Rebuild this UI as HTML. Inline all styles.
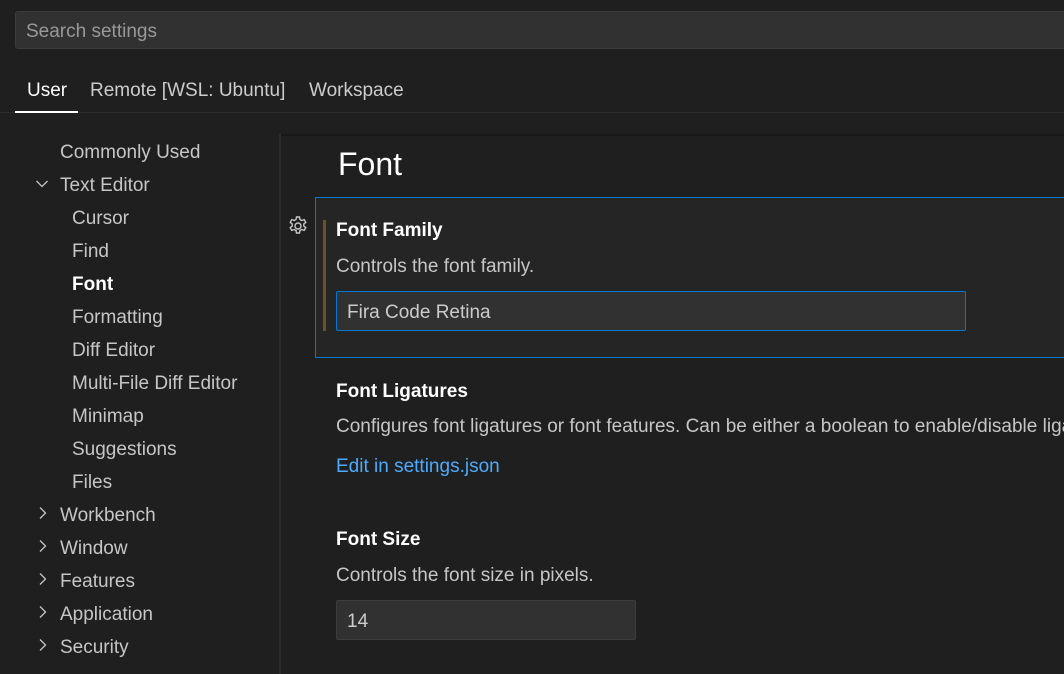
<!DOCTYPE html>
<html><head><style>
body{margin:0;width:1064px;height:666px;background:#1f1f1f;overflow:hidden;font-family:"Liberation Sans",sans-serif;color:#ccc;position:relative}
.a{position:absolute;white-space:nowrap}
.search{left:15px;top:11px;width:1060px;height:38px;background:#313131;border:1px solid #3c3c3c;border-radius:3px;box-sizing:border-box}
.search span{position:absolute;left:10px;top:9px;font-size:19px;color:#989898}
.tab{top:80px;font-size:19px;color:#ccc}
.side{font-size:19px;color:#c6c6c6;left:60px}
.sub{left:72px}
.chev{position:absolute;left:35px;width:14px;height:14px}
.t{font-size:19px;font-weight:bold;color:#fff;left:336px}
.d{font-size:19px;color:#c6c6c6;left:336px}
</style></head><body>
<div class="a search"><span>Search settings</span></div>
<div class="a tab" style="left:27px;color:#fff">User</div>
<div class="a tab" style="left:90px">Remote [WSL: Ubuntu]</div>
<div class="a tab" style="left:309px">Workspace</div>
<div class="a" style="left:0;top:112px;width:1064px;height:1px;background:#2b2b2b"></div>
<div class="a" style="left:15px;top:111px;width:63px;height:2px;background:#fff"></div>
<div class="a" style="left:279px;top:134px;width:2px;height:540px;background:#2b2b2b"></div>
<div class="a" style="left:281px;top:134px;width:800px;height:2px;background:#181818"></div>

<div class="a side" style="top:142px">Commonly Used</div>
<svg class="chev" style="top:177px" viewBox="0 0 14 14"><path d="M1.5 4l5.5 5.5 5.5-5.5" stroke="#c6c6c6" stroke-width="1.3" fill="none"/></svg>
<div class="a side" style="top:175px">Text Editor</div>
<div class="a side sub" style="top:208px">Cursor</div>
<div class="a side sub" style="top:241px">Find</div>
<div class="a side sub" style="top:274px;color:#fff;font-weight:bold">Font</div>
<div class="a side sub" style="top:307px">Formatting</div>
<div class="a side sub" style="top:340px">Diff Editor</div>
<div class="a side sub" style="top:373px">Multi-File Diff Editor</div>
<div class="a side sub" style="top:406px">Minimap</div>
<div class="a side sub" style="top:439px">Suggestions</div>
<div class="a side sub" style="top:472px">Files</div>
<div class="a side" style="top:505px">Workbench</div>
<div class="a side" style="top:538px">Window</div>
<div class="a side" style="top:571px">Features</div>
<div class="a side" style="top:604px">Application</div>
<div class="a side" style="top:637px">Security</div>
<svg class="a" style="left:36px;top:506px" width="14" height="160" viewBox="0 0 14 160"><g stroke="#c6c6c6" stroke-width="1.3" fill="none"><path d="M4 1.5l5.5 5.5-5.5 5.5"/><path d="M4 34.5l5.5 5.5-5.5 5.5"/><path d="M4 67.5l5.5 5.5-5.5 5.5"/><path d="M4 100.5l5.5 5.5-5.5 5.5"/><path d="M4 133.5l5.5 5.5-5.5 5.5"/></g></svg>

<div class="a" style="left:338px;top:146px;font-size:32px;color:#fff">Font</div>
<div class="a" style="left:315px;top:197px;width:760px;height:161px;border:1px solid #0078d4;background:#252526;box-sizing:border-box"></div>
<div class="a" style="left:323px;top:220px;width:3px;height:111px;background:#6b5420"></div>
<svg class="a" style="left:287px;top:215px" width="22" height="22" viewBox="0 0 22 22"><g fill="none" stroke="#c6c6c6" stroke-width="1.4"><circle cx="11" cy="11" r="3"/><path d="M9.5 2h3l.5 2.5 1.8 1 2.4-.9 1.6 2.7-2 1.7v2l2 1.7-1.6 2.7-2.4-.9-1.8 1-.5 2.5h-3l-.5-2.5-1.8-1-2.4.9-1.6-2.7 2-1.7v-2l-2-1.7 1.6-2.7 2.4.9 1.8-1z"/></g></svg>
<div class="a t" style="top:220px">Font Family</div>
<div class="a d" style="top:256px">Controls the font family.</div>
<div class="a" style="left:336px;top:291px;width:630px;height:40px;border:1px solid #0078d4;background:#313131;box-sizing:border-box;border-radius:2px"><span style="position:absolute;left:10px;top:10px;font-size:19px;color:#ccc">Fira Code Retina</span></div>

<div class="a t" style="top:381px">Font Ligatures</div>
<div class="a d" style="top:416px">Configures font ligatures or font features. Can be either a boolean to enable/disable ligatures</div>
<div class="a" style="left:336px;top:456px;font-size:19px;color:#4daafc">Edit in settings.json</div>

<div class="a t" style="top:529px">Font Size</div>
<div class="a d" style="top:565px">Controls the font size in pixels.</div>
<div class="a" style="left:336px;top:600px;width:300px;height:40px;border:1px solid #3c3c3c;background:#313131;box-sizing:border-box;border-radius:2px"><span style="position:absolute;left:10px;top:10px;font-size:19px;color:#ccc">14</span></div>
</body></html>
